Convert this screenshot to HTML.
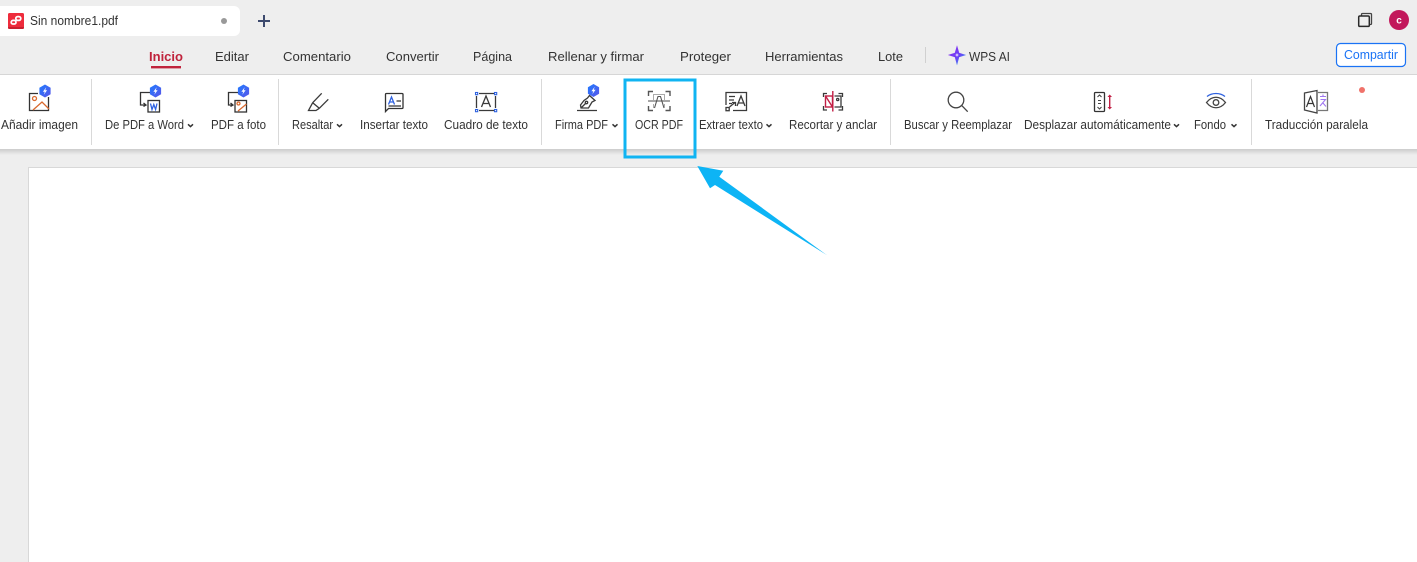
<!DOCTYPE html>
<html lang="es">
<head>
<meta charset="utf-8">
<title>Sin nombre1.pdf</title>
<style>
html,body{margin:0;padding:0;background:#eeeeee;width:1417px;height:562px;overflow:hidden}
svg{display:block}
text{font-family:"Liberation Sans",sans-serif;fill:#333}
.m{font-size:13px}
.r{font-size:12.5px}
.i{fill:none;stroke:#333;stroke-width:1.3}
.o{fill:none;stroke:#d9692e;stroke-width:1.3}
.b{fill:none;stroke:#2f62e0;stroke-width:1.3}
.c{fill:none;stroke:#3a3a3a;stroke-width:1.3}
.g{fill:none;stroke:#555;stroke-width:1.4}
.e{fill:none;stroke:#c21f45;stroke-width:1.4}
</style>
</head>
<body>
<svg width="1417" height="562" viewBox="0 0 1417 562" xmlns="http://www.w3.org/2000/svg">
<defs>
<linearGradient id="hx" x1="0" y1="0" x2="1" y2="1"><stop offset="0" stop-color="#1f7bff"/><stop offset="1" stop-color="#5a55e8"/></linearGradient>
<linearGradient id="st" x1="0" y1="0" x2="1" y2="1"><stop offset="0" stop-color="#8b2cf0"/><stop offset="0.6" stop-color="#6a45f5"/><stop offset="1" stop-color="#22b8f0"/></linearGradient>
<linearGradient id="sh" x1="0" y1="0" x2="0" y2="1"><stop offset="0" stop-color="#cccccc"/><stop offset="1" stop-color="#eeeeee"/></linearGradient>
<g id="badge">
<path d="M0-6.5 5.6-3.2V3.2L0 6.5-5.6 3.2V-3.2Z" fill="url(#hx)"/>
<path d="M1.2-3.8-2.1.7H-.2L-1.2 3.8 2.1-.7H.2Z" fill="#fff"/>
</g>
<path id="ch" d="M0 .3 2.5 2.6 5 .3" fill="none" stroke="#333" stroke-width="1.5"/>
</defs>

<rect width="1417" height="562" fill="#eeeeee"/>

<!-- tab -->
<rect x="-8" y="6" width="248" height="30" rx="6" fill="#fff"/>
<rect x="8" y="13" width="16" height="16" rx="1.5" fill="#ee2c3c"/>
<path d="M8 27H24V27.5a1.5 1.5 0 0 1-1.5 1.5H9.5A1.5 1.5 0 0 1 8 27.5Z" fill="#c9202f"/>
<rect x="15.8" y="16.6" width="5" height="3.8" rx="1.9" fill="none" stroke="#fff" stroke-width="1.7"/>
<rect x="11.2" y="20.4" width="4.8" height="3.6" rx="1.8" fill="none" stroke="#fff" stroke-width="1.7"/>
<text x="30" y="25" style="font-size:12.5px" textLength="88" lengthAdjust="spacingAndGlyphs">Sin nombre1.pdf</text>
<circle cx="224" cy="21" r="3" fill="#999"/>
<path d="M264 15v12M258 21h12" stroke="#3d4a6e" stroke-width="2" fill="none"/>

<!-- window icons -->
<path d="M1361.5 15.5V14.5a1 1 0 0 1 1-1h8a1 1 0 0 1 1 1v9a1 1 0 0 1-1 1H1369.5" fill="none" stroke="#444" stroke-width="1.3"/>
<rect x="1358.7" y="16" width="10.6" height="10.4" rx="1.2" fill="none" stroke="#2a2a2a" stroke-width="1.5"/>
<circle cx="1399" cy="20" r="10" fill="#c2185b"/>
<text x="1399" y="23.5" text-anchor="middle" style="font-size:10px;font-weight:bold;fill:#fff">c</text>

<!-- menu -->
<text class="m" x="149" y="61" textLength="34" lengthAdjust="spacingAndGlyphs" style="font-weight:bold;fill:#c0233c">Inicio</text>
<rect x="151" y="66" width="30" height="2.4" fill="#c0233c"/>
<text class="m" x="215" y="61" textLength="34" lengthAdjust="spacingAndGlyphs">Editar</text>
<text class="m" x="283" y="61" textLength="68" lengthAdjust="spacingAndGlyphs">Comentario</text>
<text class="m" x="386" y="61" textLength="53" lengthAdjust="spacingAndGlyphs">Convertir</text>
<text class="m" x="473" y="61" textLength="39" lengthAdjust="spacingAndGlyphs">Página</text>
<text class="m" x="548" y="61" textLength="96" lengthAdjust="spacingAndGlyphs">Rellenar y firmar</text>
<text class="m" x="680" y="61" textLength="51" lengthAdjust="spacingAndGlyphs">Proteger</text>
<text class="m" x="765" y="61" textLength="78" lengthAdjust="spacingAndGlyphs">Herramientas</text>
<text class="m" x="878" y="61" textLength="25" lengthAdjust="spacingAndGlyphs">Lote</text>
<rect x="925" y="47" width="1" height="16" fill="#d0d0d0"/>
<path d="M957 47 958.8 53.2 964.5 55 958.8 56.8 957 63.5 955.2 56.8 949.5 55 955.2 53.2Z" fill="url(#st)" stroke="url(#st)" stroke-width="1"/>
<path d="M957 53 957.6 54.4 959 55 957.6 55.6 957 57 956.4 55.6 955 55 956.4 54.4Z" fill="#e8dcff"/>
<text class="m" x="969" y="61" textLength="41" lengthAdjust="spacingAndGlyphs">WPS AI</text>
<rect x="1336.5" y="43.5" width="69" height="23" rx="4" fill="#fff" stroke="#1a73f5" stroke-width="1.2"/>
<text x="1344" y="59" style="font-size:12.5px;fill:#1a73f5" textLength="54" lengthAdjust="spacingAndGlyphs">Compartir</text>

<!-- ribbon -->
<rect x="0" y="74" width="1417" height="1" fill="#d6d6d6"/>
<rect x="0" y="75" width="1417" height="74" fill="#fff"/>
<rect x="0" y="149" width="1417" height="6" fill="url(#sh)"/>
<g fill="#d9d9d9">
<rect x="91" y="79" width="1" height="66"/>
<rect x="278" y="79" width="1" height="66"/>
<rect x="541" y="79" width="1" height="66"/>
<rect x="890" y="79" width="1" height="66"/>
<rect x="1251" y="79" width="1" height="66"/>
</g>

<!-- page -->
<rect x="28.5" y="167.5" width="1400" height="410" fill="#fff" stroke="#d8d8d8"/>

<!-- ribbon labels -->
<text class="r" x="1" y="129" textLength="77" lengthAdjust="spacingAndGlyphs">Añadir imagen</text>
<text class="r" x="105" y="129" textLength="79" lengthAdjust="spacingAndGlyphs">De PDF a Word</text>
<text class="r" x="211" y="129" textLength="55" lengthAdjust="spacingAndGlyphs">PDF a foto</text>
<text class="r" x="292" y="129" textLength="41" lengthAdjust="spacingAndGlyphs">Resaltar</text>
<text class="r" x="360" y="129" textLength="68" lengthAdjust="spacingAndGlyphs">Insertar texto</text>
<text class="r" x="444" y="129" textLength="84" lengthAdjust="spacingAndGlyphs">Cuadro de texto</text>
<text class="r" x="555" y="129" textLength="53" lengthAdjust="spacingAndGlyphs">Firma PDF</text>
<text class="r" x="635" y="129" textLength="48" lengthAdjust="spacingAndGlyphs">OCR PDF</text>
<text class="r" x="699" y="129" textLength="64" lengthAdjust="spacingAndGlyphs">Extraer texto</text>
<text class="r" x="789" y="129" textLength="88" lengthAdjust="spacingAndGlyphs">Recortar y anclar</text>
<text class="r" x="904" y="129" textLength="108" lengthAdjust="spacingAndGlyphs">Buscar y Reemplazar</text>
<text class="r" x="1024" y="129" textLength="147" lengthAdjust="spacingAndGlyphs">Desplazar automáticamente</text>
<text class="r" x="1194" y="129" textLength="32" lengthAdjust="spacingAndGlyphs">Fondo</text>
<text class="r" x="1265" y="129" textLength="103" lengthAdjust="spacingAndGlyphs">Traducción paralela</text>
<use href="#ch" x="188" y="124"/>
<use href="#ch" x="337" y="124"/>
<use href="#ch" x="612.5" y="124"/>
<use href="#ch" x="766.5" y="124"/>
<use href="#ch" x="1174" y="124"/>
<use href="#ch" x="1231.5" y="124"/>

<!-- Añadir imagen -->
<path d="M38 93.5H29.5V110.5H48.5V97" class="i"/>
<circle cx="34.5" cy="98.5" r="2" class="o"/>
<path d="M33 110 42 102 49 109" class="o"/>
<use href="#badge" x="45" y="91"/>

<!-- De PDF a Word -->
<path d="M150 92.5H140.5V105H146M143.5 103l2.5 2-2.5 1.5" class="i"/>
<rect x="148" y="100.5" width="11.5" height="11.5" class="i"/>
<path d="M150.5 103.5 152 109.5 153.8 104.5 155.6 109.5 157 103.5" class="b"/>
<use href="#badge" x="155.5" y="91"/>

<!-- PDF a foto -->
<path d="M238 92.5H228.5V105H233M230.5 103l2.5 2-2.5 1.5" class="i"/>
<rect x="235" y="100.5" width="11.5" height="11.5" class="i"/>
<circle cx="238.5" cy="103.5" r="1.5" class="o"/>
<path d="M238 111 246.5 104" class="o"/>
<use href="#badge" x="243.5" y="91"/>

<!-- Resaltar -->
<path d="M312.7 102.7 321.7 93.3M319.3 108.3 328.3 99.3M312.7 102.7 319.3 108.3M312.7 102.7 308.5 110.5H316L319.3 108.3" class="c"/>

<!-- Insertar texto -->
<path d="M386.5 93.5H402a1 1 0 0 1 1 1V107.5a1 1 0 0 1-1 1H388.5L385.5 111.5V94.5a1 1 0 0 1 1-1Z" class="i"/>
<path d="M388.5 104.5 391.5 97 394.5 104.5M389.6 102H393.4" class="b"/>
<path d="M396.5 101H401M388.5 106H401" class="i"/>

<!-- Cuadro de texto -->
<path d="M479 93.5H494M479 110.5H494M476.5 96V108M495.5 96V108" class="c"/>
<path d="M481.5 107 486 96 490.5 107M483 103.5H489" class="c"/>
<g fill="#fff" stroke="#2f62e0" stroke-width="1.1">
<rect x="475.5" y="92.5" width="2.2" height="2.2"/>
<rect x="494.5" y="92.5" width="2.2" height="2.2"/>
<rect x="475.5" y="109.5" width="2.2" height="2.2"/>
<rect x="494.5" y="109.5" width="2.2" height="2.2"/>
</g>

<!-- Firma PDF -->
<path d="M589.5 95.5 595 100.5 592 102 588.5 108H581L580.5 105 584 100.5 587.5 98Z" class="c"/>
<path d="M581 108 585.5 103.5" class="c"/>
<circle cx="586.5" cy="102.5" r="1.2" class="c"/>
<path d="M577 110.5H597" class="c"/>
<use href="#badge" x="593.5" y="90.5"/>

<!-- OCR -->
<path d="M648.5 96V91.5H653M665.5 91.5H670V96M648.5 106V110.5H653M665.5 110.5H670V106" class="g"/>
<path d="M648 101H670" stroke="#888" stroke-width="1.6" fill="none"/>
<path d="M654.5 108 658 96.5H660.5L664 108" fill="none" stroke="#555" stroke-width="1.1"/>
<path d="M653.5 100V94.5H664.5V100M653.5 104V108M664.5 104V108" fill="none" stroke="#aaa" stroke-width="1"/>

<!-- Extraer texto -->
<path d="M726 105V92.5H746.5V110.5H733" class="c"/>
<path d="M729 96.5H735M729 100H734M729 103.5H732" class="c"/>
<path d="M737 106 741 96 745 106M738.3 103H743.7" class="c"/>
<rect x="726" y="107.5" width="3.2" height="3.2" class="c"/>
<path d="M729.5 107 735 102.5M732 102.5H735.5V106" class="c"/>

<!-- Recortar -->
<path d="M823.5 97V93.5H827M838.5 93.5H842.5V97M823.5 106V110H827M838.5 110H842.5V106" class="c"/>
<rect x="825.5" y="96" width="7" height="11" class="e"/>
<path d="M825.5 96 832.5 107" class="e"/>
<path d="M832.8 91V111.5" class="e"/>
<path d="M834.5 96H841V107H834.5" class="c"/>
<circle cx="837.7" cy="99.5" r="1.1" class="c"/>

<!-- Buscar -->
<circle cx="956" cy="100" r="7.8" fill="none" stroke="#444" stroke-width="1.3"/>
<path d="M961.8 105.6 967.7 111.7" fill="none" stroke="#444" stroke-width="1.3"/>

<!-- Desplazar -->
<rect x="1094.5" y="92.5" width="10" height="19" rx="1" fill="none" stroke="#333" stroke-width="1.3"/>
<path d="M1097.5 97 1099.5 95 1101.5 97M1097.5 107 1099.5 109 1101.5 107M1098 100.5H1101M1098 103.5H1101" fill="none" stroke="#444" stroke-width="1.1"/>
<path d="M1109.7 96V108" class="e"/>
<path d="M1107.5 97 1109.7 94.5 1112 97ZM1107.5 107 1109.7 109.5 1112 107Z" fill="#c21f45"/>

<!-- Fondo -->
<path d="M1206.5 102.5C1212 95.5 1220 95.5 1225.5 102.5 1220 109.5 1212 109.5 1206.5 102.5Z" fill="none" stroke="#444" stroke-width="1.3"/>
<circle cx="1216" cy="102.5" r="2.8" fill="none" stroke="#444" stroke-width="1.3"/>
<path d="M1207 96.5C1212 92.5 1220 92.5 1225 96.5" class="b"/>

<!-- Traducción -->
<path d="M1304.5 93 1317 90.5V113L1304.5 110Z" fill="none" stroke="#444" stroke-width="1.3"/>
<path d="M1318 92.5H1327.5V110.5H1318" fill="none" stroke="#777" stroke-width="1.3"/>
<path d="M1306.5 107 1310.5 96.5 1314.5 107M1307.8 103.5H1313.2" fill="none" stroke="#333" stroke-width="1.2"/>
<path d="M1320 96.5H1326M1323 94.5V96.5M1320.5 99.5H1325.5L1320 106M1322.5 102.5 1326 106.5" fill="none" stroke="#a078f0" stroke-width="1.1"/>
<circle cx="1362" cy="90" r="3" fill="#f0726a"/>

<!-- highlight box -->
<rect x="625" y="80" width="70" height="77" fill="none" stroke="#10b4f2" stroke-width="3"/>

<!-- arrow -->
<path d="M697.3 166 723.3 170.7 719.3 176.7 826.7 255 715 185 710 188.3Z" fill="#0db4f5"/>
</svg>
</body>
</html>
